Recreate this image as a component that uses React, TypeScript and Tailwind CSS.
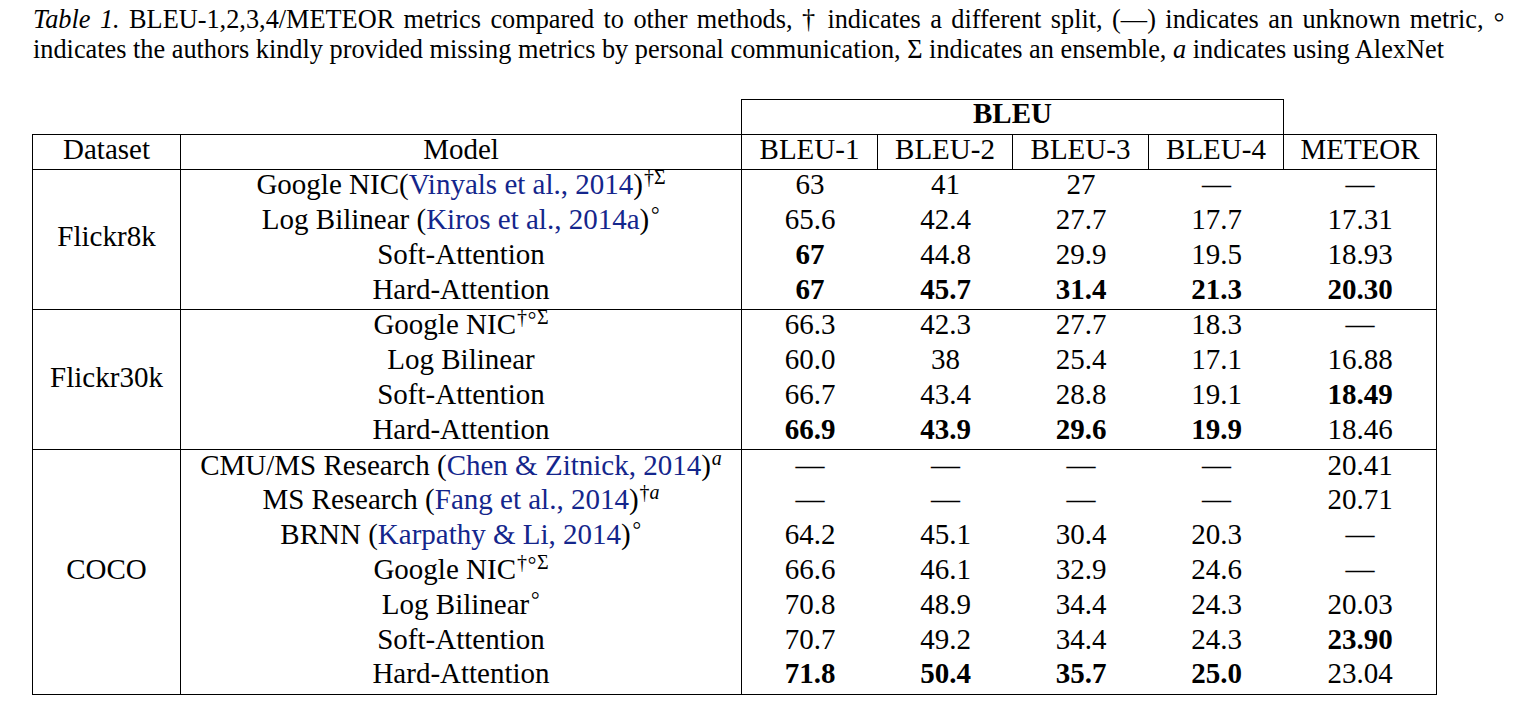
import React from "react";

type Cell = { v: string; b?: boolean };
type Row = { model: React.ReactNode; cells: Cell[] };

const L = ({ children }: { children: React.ReactNode }) => (
  <span className="text-[#14268c]">{children}</span>
);

const Sup = ({ children }: { children: React.ReactNode }) => (
  <sup className="text-[20px] ml-[1px]">{children}</sup>
);

const Circ = () => <span className="text-[28px] leading-[0]">◦</span>;

const D = "—";
const c = (v: string, b?: boolean): Cell => ({ v, b });

const sections: { name: string; rows: Row[] }[] = [
  {
    name: "Flickr8k",
    rows: [
      {
        model: (
          <>
            Google NIC(<L>Vinyals et al., 2014</L>)
            <Sup>†Σ</Sup>
          </>
        ),
        cells: [c("63"), c("41"), c("27"), c(D), c(D)],
      },
      {
        model: (
          <>
            Log Bilinear (<L>Kiros et al., 2014a</L>)
            <Sup>
              <Circ />
            </Sup>
          </>
        ),
        cells: [c("65.6"), c("42.4"), c("27.7"), c("17.7"), c("17.31")],
      },
      {
        model: <>Soft-Attention</>,
        cells: [c("67", true), c("44.8"), c("29.9"), c("19.5"), c("18.93")],
      },
      {
        model: <>Hard-Attention</>,
        cells: [c("67", true), c("45.7", true), c("31.4", true), c("21.3", true), c("20.30", true)],
      },
    ],
  },
  {
    name: "Flickr30k",
    rows: [
      {
        model: (
          <>
            Google NIC
            <Sup>
              †<Circ />Σ
            </Sup>
          </>
        ),
        cells: [c("66.3"), c("42.3"), c("27.7"), c("18.3"), c(D)],
      },
      {
        model: <>Log Bilinear</>,
        cells: [c("60.0"), c("38"), c("25.4"), c("17.1"), c("16.88")],
      },
      {
        model: <>Soft-Attention</>,
        cells: [c("66.7"), c("43.4"), c("28.8"), c("19.1"), c("18.49", true)],
      },
      {
        model: <>Hard-Attention</>,
        cells: [c("66.9", true), c("43.9", true), c("29.6", true), c("19.9", true), c("18.46")],
      },
    ],
  },
  {
    name: "COCO",
    rows: [
      {
        model: (
          <>
            CMU/MS Research (<L>Chen &amp; Zitnick, 2014</L>)
            <Sup>
              <i>a</i>
            </Sup>
          </>
        ),
        cells: [c(D), c(D), c(D), c(D), c("20.41")],
      },
      {
        model: (
          <>
            MS Research (<L>Fang et al., 2014</L>)
            <Sup>
              †<i>a</i>
            </Sup>
          </>
        ),
        cells: [c(D), c(D), c(D), c(D), c("20.71")],
      },
      {
        model: (
          <>
            BRNN (<L>Karpathy &amp; Li, 2014</L>)
            <Sup>
              <Circ />
            </Sup>
          </>
        ),
        cells: [c("64.2"), c("45.1"), c("30.4"), c("20.3"), c(D)],
      },
      {
        model: (
          <>
            Google NIC
            <Sup>
              †<Circ />Σ
            </Sup>
          </>
        ),
        cells: [c("66.6"), c("46.1"), c("32.9"), c("24.6"), c(D)],
      },
      {
        model: (
          <>
            Log Bilinear
            <Sup>
              <Circ />
            </Sup>
          </>
        ),
        cells: [c("70.8"), c("48.9"), c("34.4"), c("24.3"), c("20.03")],
      },
      {
        model: <>Soft-Attention</>,
        cells: [c("70.7"), c("49.2"), c("34.4"), c("24.3"), c("23.90", true)],
      },
      {
        model: <>Hard-Attention</>,
        cells: [c("71.8", true), c("50.4", true), c("35.7", true), c("25.0", true), c("23.04")],
      },
    ],
  },
];

const grid = "grid grid-cols-[561px_136px_135px_136px_135px_152px]";

export default function App() {
  return (
    <div className="w-[1515px] h-[706px] bg-white text-black font-[family-name:Liberation_Serif,Times_New_Roman,serif] overflow-hidden">
      <div className="pl-[33px] pt-[5px] text-[26.3px] leading-[30px] whitespace-nowrap">
        <div className="w-[1472px] h-[30px] text-justify [text-align-last:justify]">
          <i>Table 1.</i> BLEU-1,2,3,4/METEOR metrics compared to other methods, † indicates a different split, (—)
          indicates an unknown metric, <span className="text-[34px] leading-[0]">◦</span>
        </div>
        <div className="h-[30px]">
          indicates the authors kindly provided missing metrics by personal communication, Σ indicates an ensemble,{" "}
          <i>a</i> indicates using AlexNet
        </div>
      </div>

      <div className="text-[29px]">
        <div className="ml-[741px] mt-[34px] w-[543px] h-[35px] pb-[7px] border-t border-l border-r border-black flex items-center justify-center font-bold">
          BLEU
        </div>
        <div className="ml-[32px] w-[1405px] border border-black">
          <div className="flex h-[35px] border-b border-black">
            <div className="w-[148px] pb-[5px] border-r border-black flex items-center justify-center">Dataset</div>
            <div className={grid}>
              {["Model", "BLEU-1", "BLEU-2", "BLEU-3", "BLEU-4", "METEOR"].map((h, i) => (
                <div
                  key={h}
                  className={`flex items-center justify-center h-[34px] pb-[5px] ${i < 5 ? "border-r border-black" : ""}`}
                >
                  {h}
                </div>
              ))}
            </div>
          </div>
          {sections.map((s, si) => (
            <div key={s.name} className={`flex ${si > 0 ? "border-t border-black" : ""}`}>
              <div className="w-[148px] pb-[5px] border-r border-black flex items-center justify-center">{s.name}</div>
              <div className={grid}>
                {s.rows.map((r, ri) => (
                  <React.Fragment key={ri}>
                    <div className="h-[34.8px] pb-[5px] flex items-center justify-center border-r border-black whitespace-nowrap">
                      <span>{r.model}</span>
                    </div>
                    {r.cells.map((cell, ci) => (
                      <div
                        key={ci}
                        className={`h-[34.8px] pb-[5px] flex items-center justify-center ${cell.b ? "font-bold" : ""}`}
                      >
                        {cell.v}
                      </div>
                    ))}
                  </React.Fragment>
                ))}
              </div>
            </div>
          ))}
        </div>
      </div>
    </div>
  );
}
